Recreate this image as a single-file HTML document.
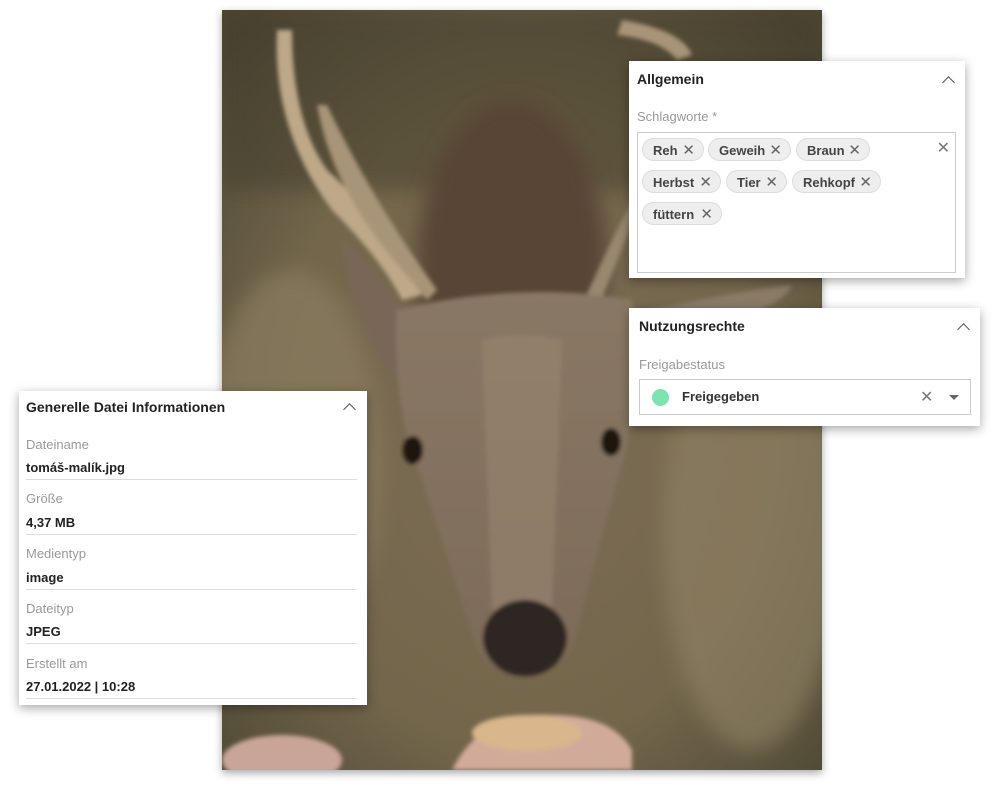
<!DOCTYPE html>
<html><head><meta charset="utf-8"><style>
body{margin:0;width:1000px;height:797px;background:#fff;position:relative;overflow:hidden;font-family:"Liberation Sans",sans-serif;}
.photo{position:absolute;left:222px;top:10px;width:600px;height:760px;box-shadow:0 3px 8px rgba(0,0,0,.35);}
.panel{position:absolute;background:#fff;box-shadow:0 3px 10px rgba(0,0,0,.35);}
.t{position:absolute;font-weight:bold;font-size:14px;color:#222;}
.chev{position:absolute;width:8px;height:8px;border-left:1.5px solid #555;border-top:1.5px solid #555;transform:rotate(45deg);}
.lbl{position:absolute;font-size:13px;color:#999;}
.val{position:absolute;font-size:13px;color:#222;font-weight:bold;}
.line{position:absolute;left:7px;width:331px;height:1px;background:#ddd;}
.chip{position:absolute;height:23px;border-radius:12px;background:#eee;border:1px solid #ddd;font-size:13px;font-weight:bold;color:#444;line-height:23px;padding-left:10px;box-sizing:border-box;}
.chip span{position:absolute;right:8px;top:0;font-weight:normal;color:#666;font-size:15px;}
</style></head><body>
<svg class="photo" viewBox="0 0 600 760" width="600" height="760">
<defs>
<radialGradient id="bg" cx="50%" cy="55%" r="70%"><stop offset="0" stop-color="#7d6d55"/><stop offset=".6" stop-color="#73664b"/><stop offset="1" stop-color="#4d4834"/></radialGradient>
<linearGradient id="face" x1="0" y1="0" x2="0" y2="1"><stop offset="0" stop-color="#8a7866"/><stop offset="1" stop-color="#7d6a58"/></linearGradient>
<filter id="bl"><feGaussianBlur stdDeviation="10"/></filter>
<filter id="bl2"><feGaussianBlur stdDeviation="2"/></filter>
</defs>
<rect width="600" height="760" fill="url(#bg)"/>
<rect width="600" height="180" fill="#3f3b2b" opacity=".45" filter="url(#bl)"/>
<ellipse cx="70" cy="460" rx="90" ry="200" fill="#8f8064" opacity=".6" filter="url(#bl)"/>
<ellipse cx="530" cy="520" rx="90" ry="220" fill="#928366" opacity=".6" filter="url(#bl)"/>
<ellipse cx="290" cy="260" rx="95" ry="170" fill="#594535" filter="url(#bl)"/>
<g filter="url(#bl2)">
<path d="M55 20 Q50 120 110 200 Q160 250 180 290 L200 285 Q150 200 105 160 Q70 110 70 20Z" fill="#bda888"/>
<path d="M95 95 Q110 180 180 260 L205 290 L215 280 Q150 190 105 95Z" fill="#a89478"/>
<path d="M400 10 Q460 20 470 45 L455 50 Q440 30 395 25Z" fill="#a89478"/>
<path d="M410 190 Q380 250 360 295 L375 300 Q400 240 415 200Z" fill="#9a8770"/>
<path d="M120 230 Q130 330 180 370 L190 320 Q160 260 120 230Z" fill="#7a6656"/>
<path d="M430 300 Q520 280 570 275 Q560 300 470 320Z" fill="#8a7a66"/>
<path d="M175 300 Q300 270 410 290 Q420 400 395 470 Q370 560 350 640 Q300 690 255 640 Q230 560 200 470 Q170 400 175 300Z" fill="url(#face)"/>
<path d="M260 330 Q300 320 340 330 L330 600 L270 600Z" fill="#97866f" opacity=".6"/>
<ellipse cx="303" cy="628" rx="42" ry="38" fill="#2e2622"/>
<ellipse cx="191" cy="440" rx="10" ry="14" fill="#1a1410"/>
<ellipse cx="389" cy="432" rx="10" ry="14" fill="#1a1410"/>
<ellipse cx="60" cy="750" rx="60" ry="25" fill="#c9a597"/>
<path d="M230 760 Q260 700 330 705 Q390 705 410 740 L410 760Z" fill="#d1aa9a"/>
<ellipse cx="305" cy="723" rx="55" ry="18" fill="#d9b68c"/>
</g>
</svg>

<div class="panel" style="left:629px;top:61px;width:336px;height:217px;">
<div class="t" style="left:8px;top:10px;">Allgemein</div>
<div class="chev" style="left:315px;top:17px;"></div>
<div class="lbl" style="left:8px;top:48px;">Schlagworte *</div>
<div style="position:absolute;left:8px;top:71px;width:319px;height:141px;border:1px solid #ccc;box-sizing:border-box;">
<div class="chip" style="left:4px;top:5px;width:62px;">Reh<span>✕</span></div>
<div class="chip" style="left:70px;top:5px;width:83px;">Geweih<span>✕</span></div>
<div class="chip" style="left:158px;top:5px;width:74px;">Braun<span>✕</span></div>
<div class="chip" style="left:4px;top:37px;width:79px;">Herbst<span>✕</span></div>
<div class="chip" style="left:88px;top:37px;width:61px;">Tier<span>✕</span></div>
<div class="chip" style="left:154px;top:37px;width:89px;">Rehkopf<span>✕</span></div>
<div class="chip" style="left:4px;top:69px;width:80px;">füttern<span>✕</span></div>
<div style="position:absolute;right:5px;top:5px;color:#777;font-size:16px;">✕</div>
</div></div>

<div class="panel" style="left:629px;top:308px;width:351px;height:118px;">
<div class="t" style="left:10px;top:10px;">Nutzungsrechte</div>
<div class="chev" style="left:330px;top:17px;"></div>
<div class="lbl" style="left:10px;top:49px;">Freigabestatus</div>
<div style="position:absolute;left:10px;top:71px;width:332px;height:36px;border:1px solid #ccc;box-sizing:border-box;">
<div style="position:absolute;left:12px;top:9px;width:17px;height:17px;border-radius:50%;background:#7de3b0;"></div>
<div class="val" style="left:42px;top:9px;color:#333;">Freigegeben</div>
<div style="position:absolute;left:280px;top:7px;color:#777;font-size:16px;">✕</div>
<div style="position:absolute;left:309px;top:15px;border-left:5px solid transparent;border-right:5px solid transparent;border-top:5px solid #666;"></div>
</div></div>

<div class="panel" style="left:19px;top:391px;width:348px;height:314px;">
<div class="t" style="left:7px;top:8px;">Generelle Datei Informationen</div>
<div class="chev" style="left:326px;top:14px;"></div>
<div class="lbl" style="left:7px;top:46px;">Dateiname</div>
<div class="val" style="left:7px;top:69px;">tomáš-malík.jpg</div><div class="line" style="top:88px;"></div>
<div class="lbl" style="left:7px;top:100px;">Größe</div>
<div class="val" style="left:7px;top:124px;">4,37 MB</div><div class="line" style="top:143px;"></div>
<div class="lbl" style="left:7px;top:155px;">Medientyp</div>
<div class="val" style="left:7px;top:179px;">image</div><div class="line" style="top:198px;"></div>
<div class="lbl" style="left:7px;top:210px;">Dateityp</div>
<div class="val" style="left:7px;top:233px;">JPEG</div><div class="line" style="top:252px;"></div>
<div class="lbl" style="left:7px;top:265px;">Erstellt am</div>
<div class="val" style="left:7px;top:288px;">27.01.2022 | 10:28</div><div class="line" style="top:307px;"></div>
</div>
</body></html>
